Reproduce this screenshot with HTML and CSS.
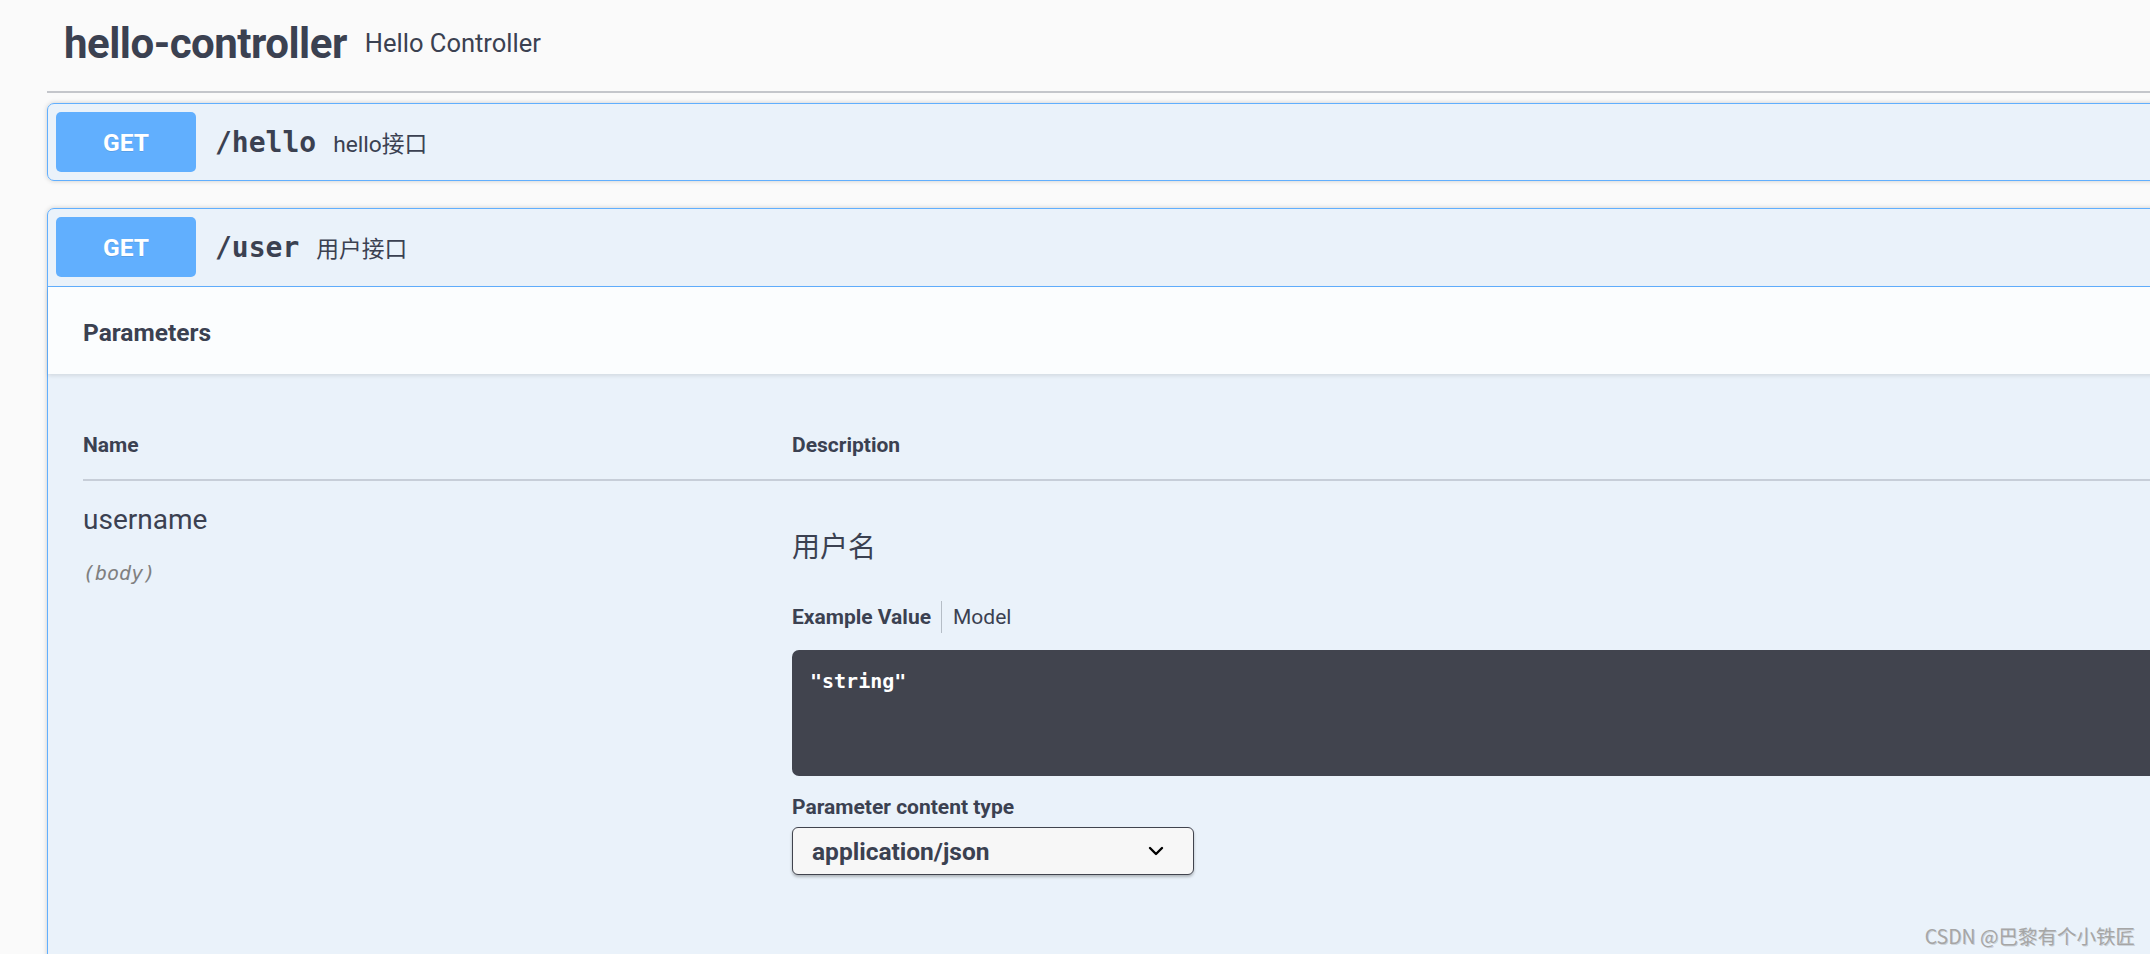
FILE: index.html
```html
<!DOCTYPE html>
<html lang="zh">
<head>
<meta charset="utf-8">
<title>Swagger UI</title>
<link rel="stylesheet" href="styles.css">
</head>
<body>
<div class="wrapper">
  <div class="tag">
    <h3 class="tag-title">hello-controller</h3>
    <small class="tag-desc">Hello Controller</small>
  </div>

  <div class="opblock">
    <div class="summary">
      <span class="method">GET</span>
      <span class="path">/hello</span>
      <span class="summary-desc">hello接口</span>
    </div>
  </div>

  <div class="opblock opblock-open">
    <div class="summary summary-open">
      <span class="method">GET</span>
      <span class="path">/user</span>
      <span class="summary-desc">用户接口</span>
    </div>
    <div class="section-header">
      <h4 class="section-title">Parameters</h4>
    </div>
    <div class="table-container">
      <div class="params-head">
        <div class="col-name">Name</div>
        <div class="col-desc">Description</div>
      </div>
      <div class="params-row">
        <div class="col-name">
          <div class="param-name">username</div>
          <div class="param-in">(body)</div>
        </div>
        <div class="col-desc">
          <p class="markdown">用户名</p>
          <div class="tabs">
            <span class="tab tab-active">Example Value</span>
            <span class="tab tab-model">Model</span>
          </div>
          <pre class="example">"string"</pre>
          <div class="ct-label">Parameter content type</div>
          <div class="select">
            <span>application/json</span>
            <svg class="chevron" width="20" height="20" viewBox="0 0 20 20"><path d="M4 7l6 6 6-6" fill="none" stroke="#000" stroke-width="2.4" stroke-linecap="round" stroke-linejoin="round"/></svg>
          </div>
        </div>
      </div>
    </div>
  </div>
</div>
<div class="watermark">CSDN @巴黎有个小铁匠</div>
</body>
</html>
```

FILE: styles.css
```css
html, body {
  margin: 0;
  padding: 0;
}
body {
  width: 2150px;
  height: 954px;
  overflow: hidden;
  background: #fafafa;
  font-family: "Roboto", "Noto Sans CJK SC", sans-serif;
  color: #3b4151;
  position: relative;
}
.wrapper {
  width: 2560px;
  padding-left: 47px;
}
.tag {
  display: flex;
  align-items: center;
  padding: 16px 35px 19px 17px;
  border-bottom: 2px solid rgba(59, 65, 81, 0.28);
  margin-bottom: 10px;
}
.tag-title {
  margin: 0;
  font-size: 42px;
  line-height: 56px;
  font-weight: 700;
  letter-spacing: -0.5px;
  color: #3b4151;
}
.tag-desc {
  font-size: 25.5px;
  line-height: 30px;
  padding: 0 18px;
  margin-top: -3px;
  color: #3b4151;
}
.opblock {
  border: 1px solid #61affe;
  border-radius: 7px;
  background: rgba(97, 175, 254, 0.1);
  box-shadow: 0 0 5px rgba(0, 0, 0, 0.19);
  margin-bottom: 27px;
}
.opblock-open {
  height: 900px;
}
.summary {
  display: flex;
  align-items: center;
  padding: 8px;
}
.summary-open {
  padding-bottom: 9px;
  border-bottom: 1px solid #61affe;
}
.method {
  width: 140px;
  height: 60px;
  border-radius: 5px;
  background: #61affe;
  color: #fff;
  font-size: 24.5px;
  font-weight: 700;
  display: flex;
  align-items: center;
  justify-content: center;
  text-shadow: 0 1px 0 rgba(0, 0, 0, 0.1);
}
.path {
  font-family: "DejaVu Sans Mono", monospace;
  font-size: 28px;
  font-weight: 700;
  padding: 0 17px 0 19px;
  color: #3b4151;
}
.summary-desc {
  font-size: 22.75px;
  color: #3b4151;
}
.section-header {
  height: 87px;
  box-sizing: border-box;
  display: flex;
  align-items: center;
  padding: 4px 35px 0;
  background: rgba(255, 255, 255, 0.8);
  box-shadow: 0 2px 4px rgba(0, 0, 0, 0.1);
}
.section-title {
  margin: 0;
  font-size: 24.5px;
  font-weight: 700;
}
.table-container {
  padding: 36px 35px 35px;
}
.params-head {
  display: flex;
  border-bottom: 2px solid rgba(59, 65, 81, 0.2);
  padding: 20px 0 19px;
  font-size: 21px;
  line-height: 30px;
  font-weight: 700;
}
.col-name {
  width: 709px;
  flex: none;
}
.col-desc {
  flex: 1;
}
.params-row {
  display: flex;
  padding-top: 18px;
}
.param-name {
  font-size: 28px;
  line-height: 42px;
}
.param-in {
  margin-top: 17px;
  font-family: "DejaVu Sans Mono", monospace;
  font-style: italic;
  font-size: 20px;
  line-height: 30px;
  color: #808080;
}
.markdown {
  margin: 29px 0 0;
  font-size: 28px;
  line-height: 40px;
}
.tabs {
  display: flex;
  align-items: center;
  margin-top: 33px;
  font-size: 21px;
  line-height: 30px;
}
.tab-active {
  font-weight: 700;
  padding-right: 10px;
}
.tab-model {
  padding-left: 11px;
  border-left: 1px solid rgba(59, 65, 81, 0.3);
  line-height: 32px;
}
.example {
  margin: 17px 0 0;
  height: 126px;
  box-sizing: border-box;
  padding: 17px 18px;
  background: #41444e;
  border-radius: 7px;
  color: #fff;
  font-family: "DejaVu Sans Mono", monospace;
  font-weight: 700;
  font-size: 20px;
  line-height: 28px;
}
.ct-label {
  margin-top: 16px;
  font-size: 21px;
  line-height: 30px;
  font-weight: 700;
}
.select {
  margin-top: 5px;
  width: 402px;
  height: 48px;
  box-sizing: border-box;
  display: flex;
  align-items: center;
  justify-content: space-between;
  padding: 0 27px 0 19px;
  border: 1px solid #41444e;
  border-radius: 6px;
  background: #f7f7f7;
  box-shadow: 0 2px 3px rgba(0, 0, 0, 0.25);
  font-size: 24.5px;
  font-weight: 700;
}
.chevron {
  display: block;
}
.watermark {
  position: absolute;
  right: 15px;
  bottom: 6px;
  font-family: "Noto Sans CJK SC", sans-serif;
  font-size: 19.5px;
  line-height: 24px;
  color: #a6a6a6;
  text-shadow: 1px 1px 0 rgba(0, 0, 0, 0.15);
}
```
